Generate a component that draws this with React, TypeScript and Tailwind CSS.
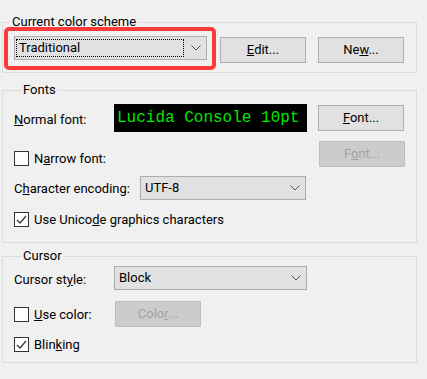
import type { ReactNode } from 'react'

const ui = "font-['Roboto',_'Noto_Sans',_sans-serif] text-[13px] text-black"

function Chevron() {
  return (
    <svg width="10" height="6" viewBox="0 0 10 6" className="shrink-0" aria-hidden="true">
      <polyline points="0.5,0.5 5,5 9.5,0.5" fill="none" stroke="#555" strokeWidth="1" />
    </svg>
  )
}

function Check({ checked, className = '' }: { checked?: boolean; className?: string }) {
  return (
    <span className={`flex size-[15px] shrink-0 items-center justify-center border border-[#333] bg-white ${className}`}>
      {checked && (
        <svg width="13" height="13" viewBox="0 0 13 13" aria-hidden="true">
          <polyline points="2,7 5,10 11,3" fill="none" stroke="#333" strokeWidth="1.2" />
        </svg>
      )}
    </span>
  )
}

function Button({ children, disabled, className = '' }: { children: ReactNode; disabled?: boolean; className?: string }) {
  return (
    <div
      className={`flex h-[26px] w-[86px] shrink-0 items-center justify-center border ${
        disabled ? 'border-[#bfbfbf] bg-[#cccccc] text-[#a3a3a3]' : 'border-[#adadad] bg-[#e1e1e1]'
      } ${className}`}
    >
      {children}
    </div>
  )
}

function Combo({ value, width, focus }: { value: string; width: string; focus?: boolean }) {
  return (
    <div className={`flex h-[24px] shrink-0 items-center border border-[#adadad] bg-[#e1e1e1] pr-[5px] ${width}`}>
      {focus ? (
        <div className="ml-[1px] flex h-[18px] w-[168px] items-center border border-dotted border-black pl-[2px]">{value}</div>
      ) : (
        <div className="flex-1 pl-[4px]">{value}</div>
      )}
      <div className="flex-1" />
      <Chevron />
    </div>
  )
}

function Group({ title, children, className = '' }: { title: string; children: ReactNode; className?: string }) {
  return (
    <fieldset className={`border border-[#dcdcdc] ${className}`}>
      <legend className="ml-[7px] px-[2px] leading-[14px]">{title}</legend>
      {children}
    </fieldset>
  )
}

export default function App() {
  return (
    <div className={`${ui} flex h-[379px] w-[427px] flex-col bg-[#f0f0f0] pl-[2px] pr-[10px] pt-[15px]`}>
      <Group title="Current color scheme" className="pb-[2px]">
        <div className="flex items-start">
          <div className="-mt-[2px] ml-[1px] h-[43px] w-[212px] rounded-[5px] border-[4px] border-[#fd3a3a] pl-[6px] pt-[5px]">
            <Combo value="Traditional" width="w-[193px]" focus />
          </div>
          <Button className="ml-[4px] mt-[8px]">
            <span>
              <u>E</u>dit...
            </span>
          </Button>
          <Button className="ml-[12px] mt-[8px]">
            <span>
              Ne<u>w</u>...
            </span>
          </Button>
        </div>
      </Group>

      <Group title="Fonts" className="mt-[10px] pb-[15px] pl-[11px]">
        <div className="mt-[7px] flex h-[28px] items-center">
          <span className="w-[100px] pt-[3px]">
            <u>N</u>ormal font:
          </span>
          <div className="flex h-[28px] w-[193px] items-center bg-black pl-[3px] font-['Liberation_Mono',_monospace] text-[16px] text-[#00e600]">
            Lucida Console 10pt
          </div>
          <Button className="ml-[11px]">
            <span>
              <u>F</u>ont...
            </span>
          </Button>
        </div>
        <div className="mt-[9px] flex h-[26px] items-start">
          <Check className="mt-[10px]" />
          <span className="ml-[5px] mt-[8px] leading-[20px]">
            N<u>a</u>rrow font:
          </span>
          <div className="flex-1" />
          <Button disabled className="mr-[11px]">
            <span>
              F<u>o</u>nt...
            </span>
          </Button>
        </div>
        <div className="mt-[9px] flex h-[24px] items-center">
          <span className="w-[126px] whitespace-nowrap pt-[2px]">
            C<u>h</u>aracter encoding:
          </span>
          <Combo value="UTF-8" width="w-[166px]" />
        </div>
        <div className="mt-[12px] flex h-[15px] items-center">
          <Check checked />
          <span className="ml-[5px]">
            Use Unico<u>d</u>e graphics characters
          </span>
        </div>
      </Group>

      <Group title="Cursor" className="mt-[6px] pb-[10px] pl-[11px]">
        <div className="mt-[3px] flex h-[24px] items-center">
          <span className="w-[100px] pt-[3px]">
            Cursor st<u>y</u>le:
          </span>
          <Combo value="Block" width="w-[193px]" />
        </div>
        <div className="mt-[11px] flex h-[26px] items-center">
          <Check />
          <span className="ml-[5px] w-[81px] pt-[1px]">
            <u>U</u>se color:
          </span>
          <Button disabled>
            <span>
              Colo<u>r</u>...
            </span>
          </Button>
        </div>
        <div className="mt-[10px] flex h-[15px] items-center">
          <Check checked />
          <span className="ml-[5px]">
            Blin<u>k</u>ing
          </span>
        </div>
      </Group>
    </div>
  )
}
